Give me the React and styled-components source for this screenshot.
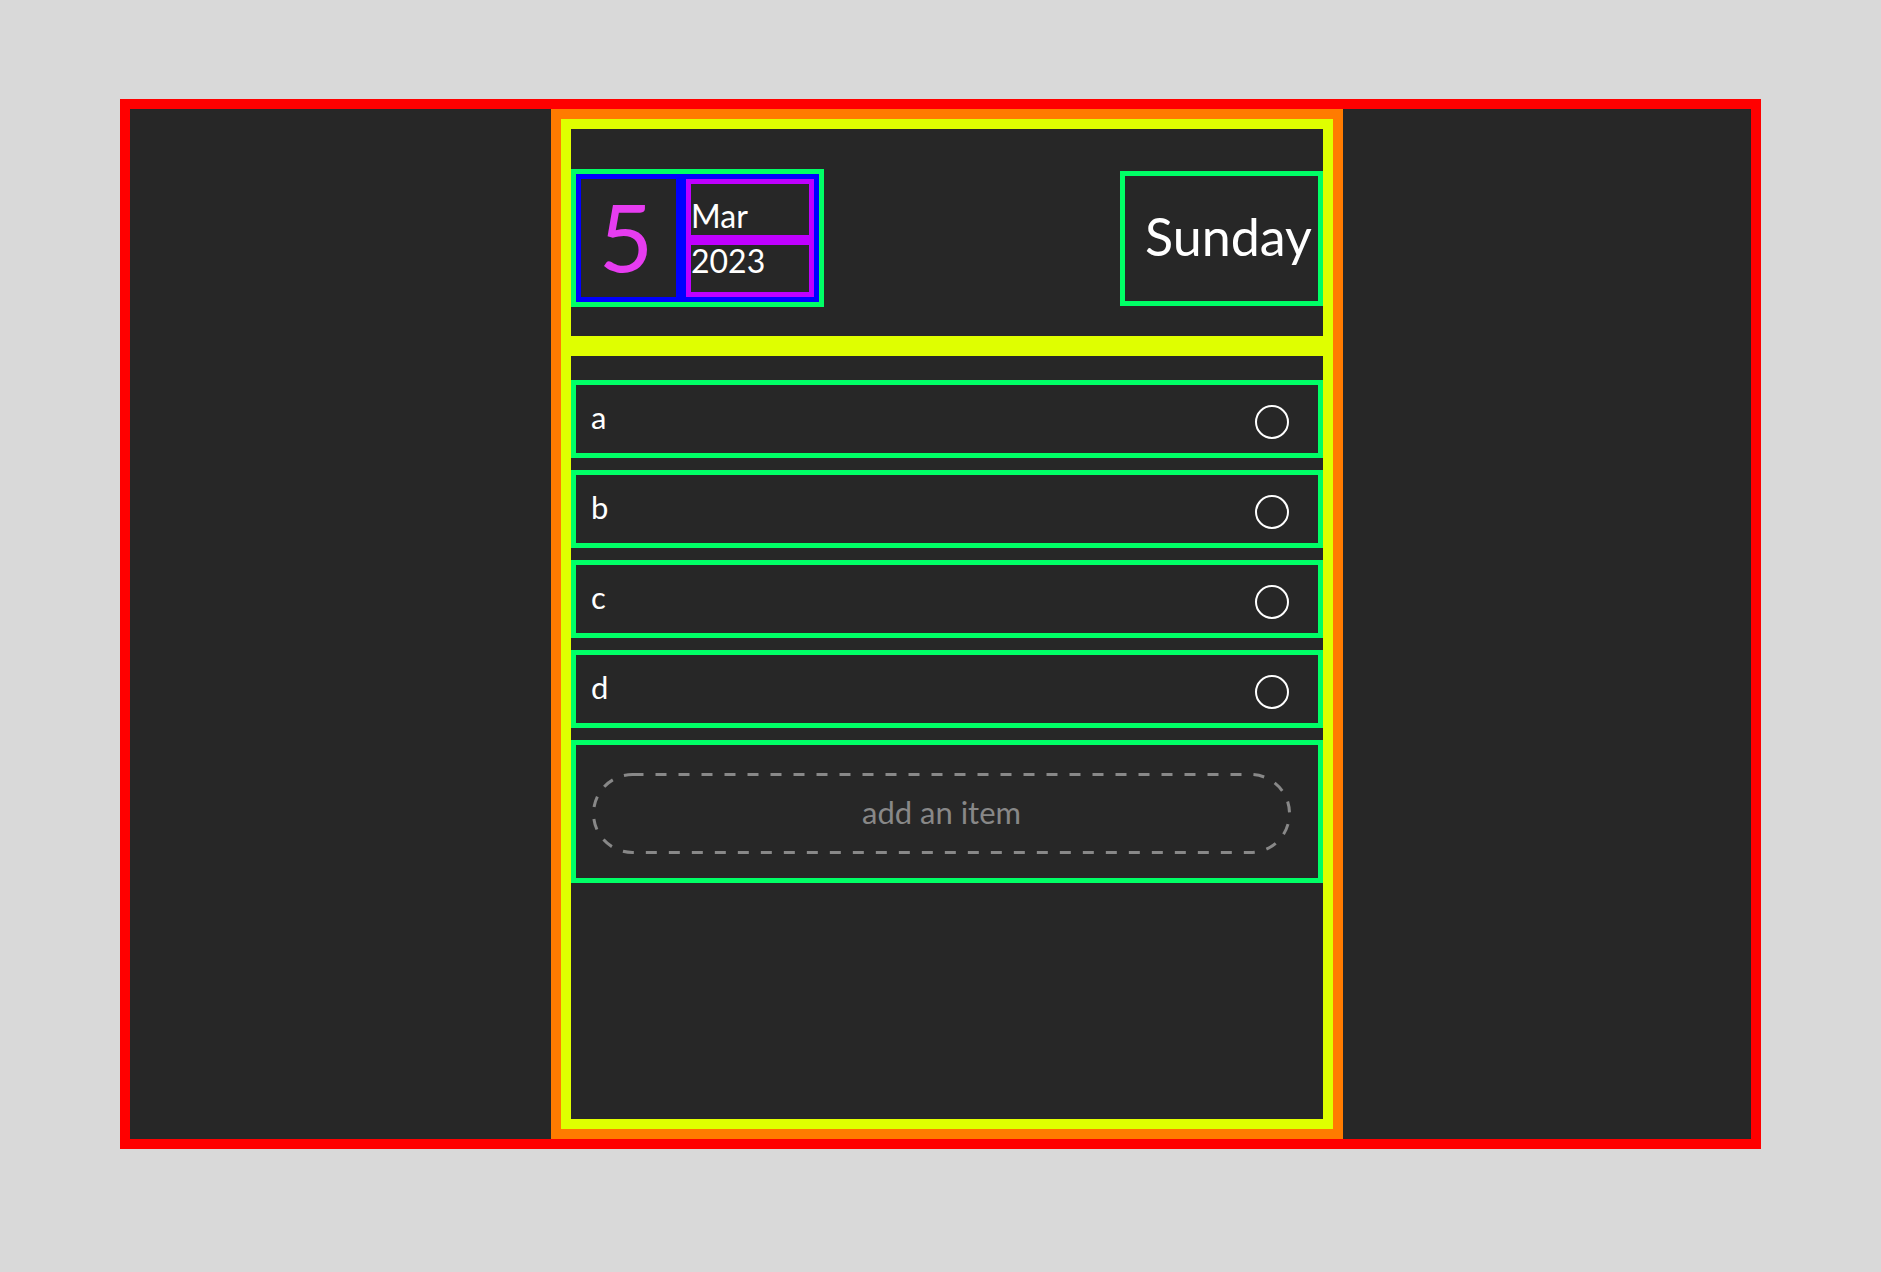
import React from 'react'
import styled, { createGlobalStyle } from 'styled-components'

const GlobalStyle = createGlobalStyle`
  html, body {
    margin: 0;
    padding: 0;
    background: #d9d9d9;
    font-family: Lato, "Open Sans", sans-serif;
  }
  * {
    box-sizing: border-box;
  }
`

const Frame = styled.div`
  margin: 99px 120px 0;
  height: 1050px;
  border: 10px solid #ff0000;
  background: #272727;
  display: grid;
  grid-template-columns: 421px 792px 1fr;
`

const Column = styled.div`
  grid-column: 2;
  border: 10px solid #ff7b00;
  display: flex;
  flex-direction: column;
`

const Panel = styled.div`
  border: 10px solid #dfff00;
`

const Header = styled(Panel)`
  height: 227px;
  padding-top: 11px;
  display: flex;
  align-items: center;
  justify-content: space-between;
`

const DateBox = styled.div`
  border: 5px solid #00ff66;
`

const DateInner = styled.div`
  border: 5px solid #0000ff;
  background: #0000ff;
  display: flex;
  gap: 10px;
  height: 128px;
`

const Day = styled.div`
  width: 95px;
  background: #272727;
  color: #e63cf0;
  font-size: 94px;
  line-height: 1;
  display: flex;
  align-items: center;
  justify-content: center;
  padding: 0 5px 4px 0;
`

const MonthYear = styled.div`
  width: 128px;
  background: #bf00ff;
  padding: 5px;
  display: flex;
  flex-direction: column;
  gap: 10px;
`

const Cell = styled.div`
  background: #272727;
  color: #fff;
  font-size: 32px;
  line-height: 1;
  height: ${p => p.$h}px;
  display: flex;
  align-items: ${p => (p.$bottom ? 'flex-end' : 'flex-start')};
  padding-bottom: ${p => (p.$bottom ? 3 : 0)}px;
`

const Weekday = styled.div`
  border: 5px solid #00ff66;
  height: 135px;
  width: 203px;
  color: #fff;
  font-size: 52px;
  display: flex;
  align-items: center;
  padding: 0 0 4px 20px;
`

const List = styled(Panel)`
  flex: 1;
  padding-top: 12px;
`

const Item = styled.div`
  margin-top: 12px;
  height: 78px;
  border: 5px solid #00ff66;
  display: flex;
  align-items: center;
  justify-content: space-between;
  padding: 0 29px 4px 15px;
  color: #fff;
  font-size: 31px;
`

const Check = styled.span`
  width: 34px;
  height: 34px;
  border: 2.5px solid #fff;
  border-radius: 50%;
  margin-top: 10px;
`

const AddBox = styled.div`
  margin-top: 12px;
  height: 143px;
  border: 5px solid #00ff66;
  padding: 28px 27px 24px 16px;
`

const AddInput = styled.div`
  position: relative;
  height: 81px;
  color: #888;
  font-size: 31px;
  display: flex;
  align-items: center;
  justify-content: center;
  padding-bottom: 3px;
`

const DashedOutline = styled.svg`
  position: absolute;
  inset: 0;
  width: 100%;
  height: 100%;
  overflow: visible;
`

const items = ['a', 'b', 'c', 'd']

export default function App() {
  return (
    <>
      <GlobalStyle />
      <Frame>
        <Column>
          <Header>
            <DateBox>
              <DateInner>
                <Day>5</Day>
                <MonthYear>
                  <Cell $h={51} $bottom>Mar</Cell>
                  <Cell $h={47}>2023</Cell>
                </MonthYear>
              </DateInner>
            </DateBox>
            <Weekday>Sunday</Weekday>
          </Header>
          <List>
            {items.map(item => (
              <Item key={item}>
                {item}
                <Check />
              </Item>
            ))}
            <AddBox>
              <AddInput>
                <DashedOutline>
                  <rect
                    x="1.5"
                    y="1.5"
                    width="calc(100% - 3px)"
                    height="78"
                    rx="39"
                    fill="none"
                    stroke="#888"
                    strokeWidth="3"
                    strokeDasharray="11 12"
                  />
                </DashedOutline>
                add an item
              </AddInput>
            </AddBox>
          </List>
        </Column>
      </Frame>
    </>
  )
}
